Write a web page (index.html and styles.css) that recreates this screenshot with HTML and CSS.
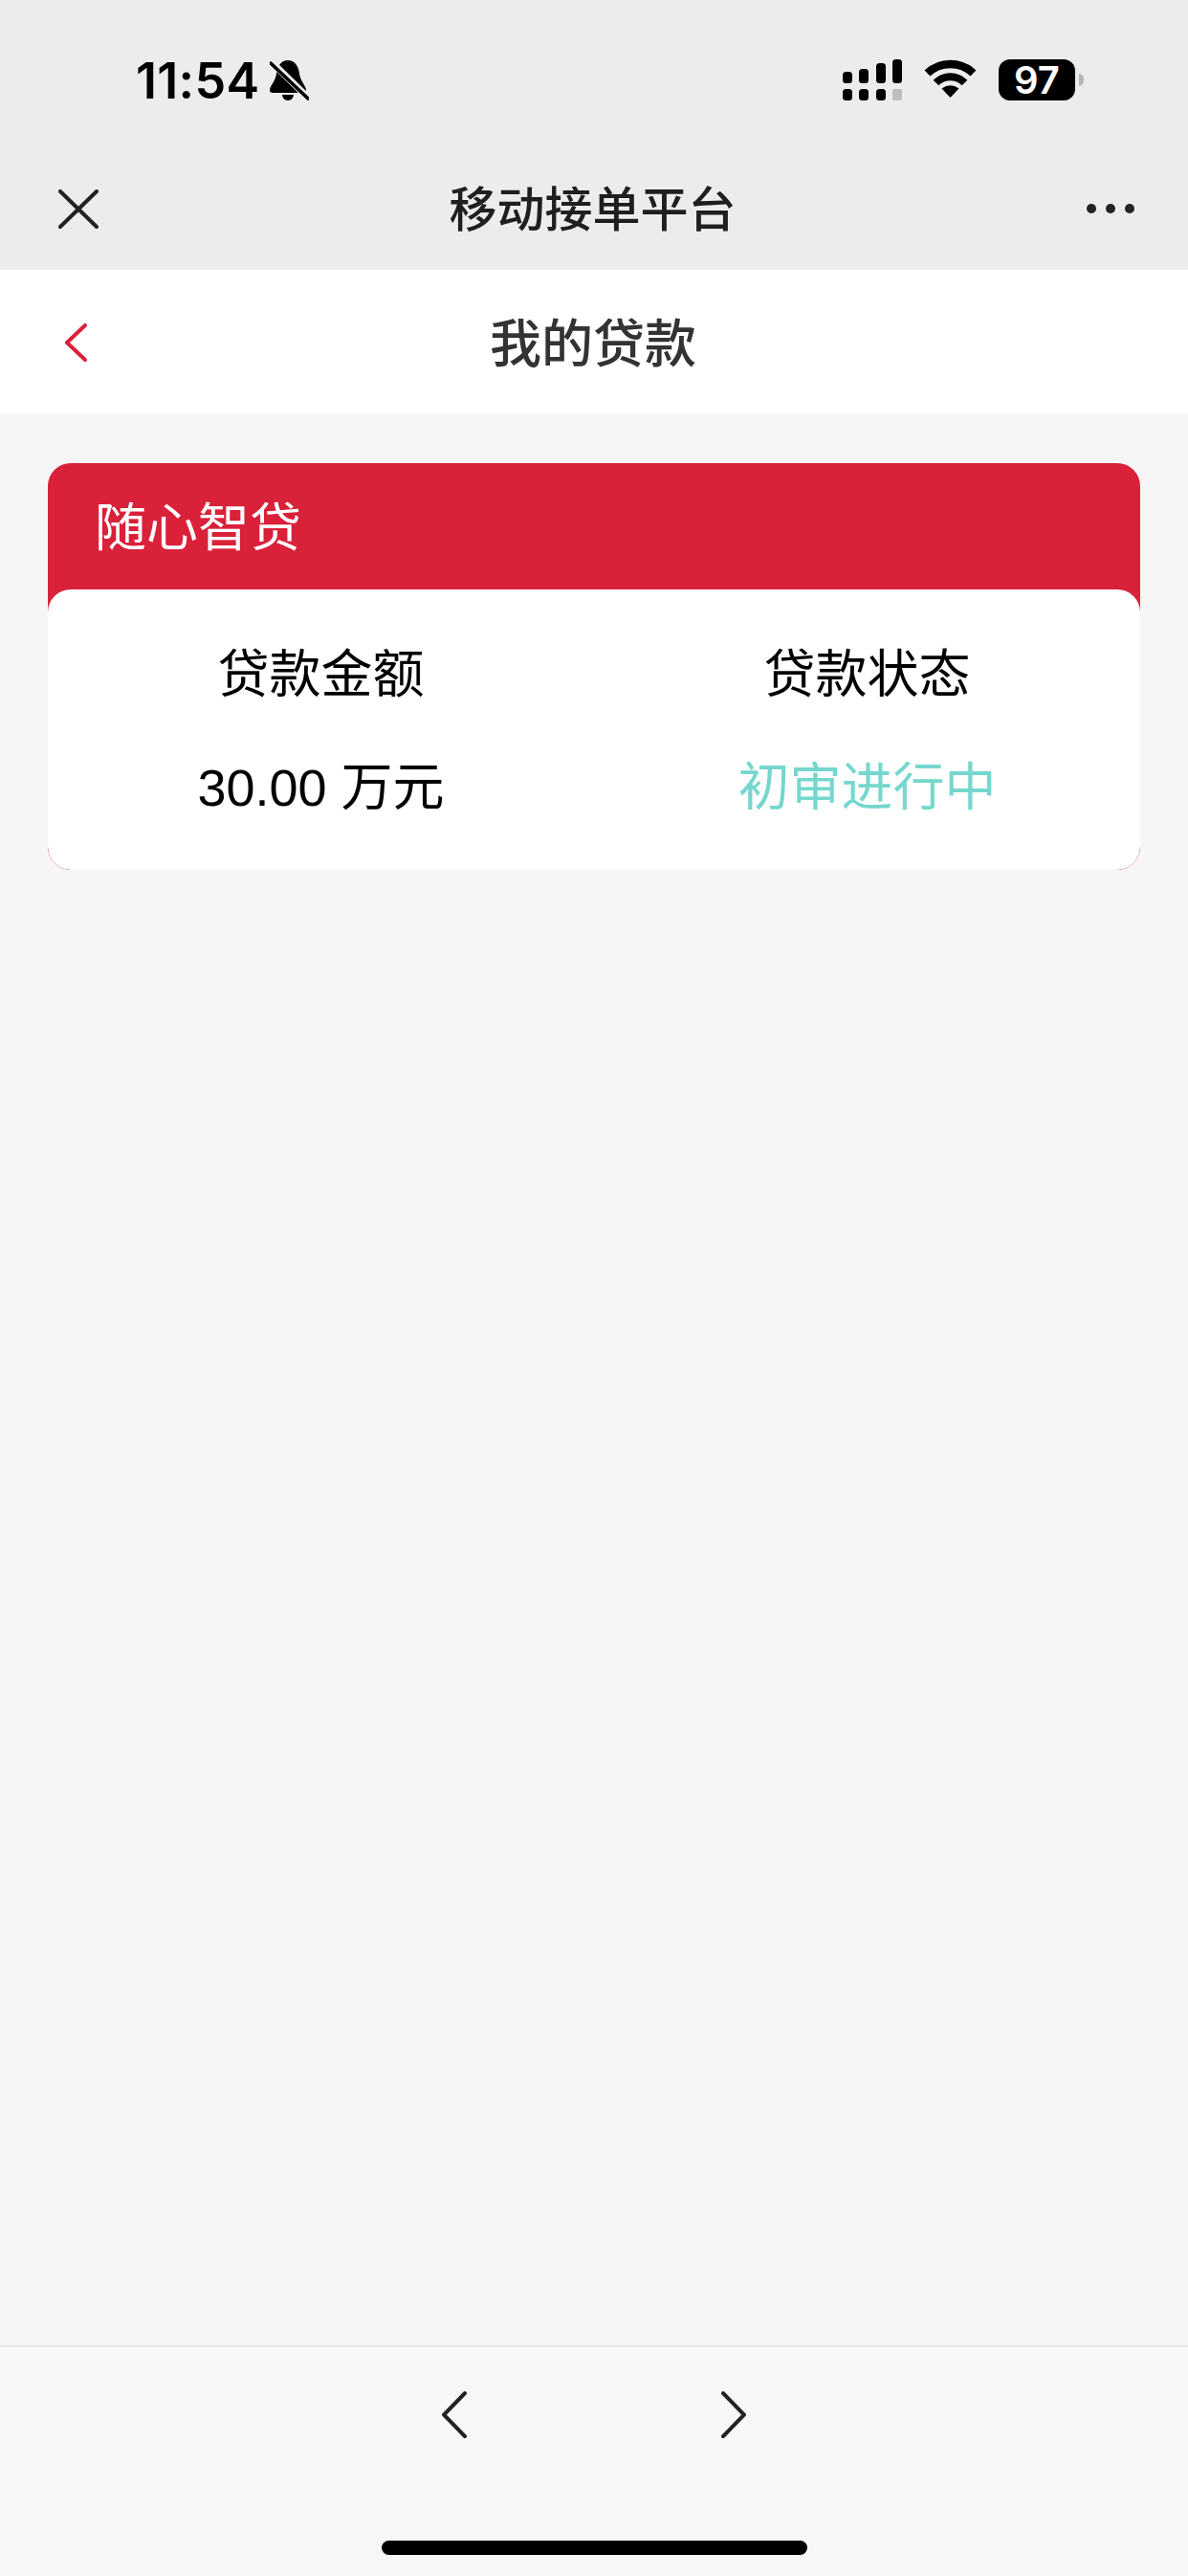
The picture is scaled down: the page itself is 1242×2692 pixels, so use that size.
FILE: index.html
```html
<!DOCTYPE html>
<html>
<head lang="zh">
    <meta charset="UTF-8">
    <title>我的贷款</title>
    <link rel="stylesheet" href="styles.css">
</head>
<body>
    <div id="top">
        <div id="status">
            <div class="status-left">
                <span class="time">11:54</span>
                <svg class="bell" width="41" height="42" viewBox="0 0 41 42">
                    <path d="M19 0C12 0 8 6 7 14C6 22 0 27 0 31C0 33 1 34 3 34H35C37 34 38 33 38 31C38 27 32 22 31 14C30 6 26 0 19 0Z"/>
                    <path d="M13 36a6 6 0 0 0 12 0Z"/>
                    <line x1="0" y1="0" x2="41" y2="40" stroke="#ececec" stroke-width="7"/>
                    <line x1="1" y1="3" x2="40" y2="40" stroke="#000" stroke-width="3.5" stroke-linecap="round"/>
                </svg>
            </div>
            <div class="status-right">
                <svg width="62" height="43" viewBox="0 0 62 43">
                    <rect x="0" y="13" width="10" height="12" rx="3.5"/>
                    <rect x="17" y="10" width="10" height="15" rx="3.5"/>
                    <rect x="35" y="4" width="10" height="21" rx="3.5"/>
                    <rect x="52" y="0" width="10" height="25" rx="3.5"/>
                    <rect x="0" y="31" width="10" height="12" rx="3.5"/>
                    <rect x="17" y="31" width="10" height="12" rx="3.5"/>
                    <rect x="35" y="31" width="10" height="12" rx="3.5"/>
                    <rect x="52" y="31" width="10" height="12" rx="2" fill="#bdbdbd"/>
                </svg>
                <svg width="55" height="40" viewBox="0 0 55 40" fill="none" stroke="#000">
                    <path d="M3.5 14.5A35 35 0 0 1 51.5 14.5" stroke-width="8.5"/>
                    <path d="M12.5 24.5A21 21 0 0 1 42.5 24.5" stroke-width="8"/>
                    <path d="M27.5 40L18.5 30.5Q27.5 24 36.5 30.5Z" fill="#000" stroke="none"/>
                </svg>
                <div class="battery">
                    <div class="battery-body">97</div>
                    <div class="battery-cap"></div>
                </div>
            </div>
        </div>
        <div class="bar wx-bar">
            <svg class="bar-left" width="42" height="41" viewBox="0 0 42 41" fill="none" stroke="#222" stroke-width="4" stroke-linecap="round">
                <path d="M2 2L40 39M40 2L2 39"/>
            </svg>
            <div class="wx-title">移动接单平台</div>
            <svg class="bar-right" width="50" height="10" viewBox="0 0 50 10" fill="#222">
                <circle cx="5" cy="5" r="5"/>
                <circle cx="25" cy="5" r="5"/>
                <circle cx="45" cy="5" r="5"/>
            </svg>
        </div>
    </div>

    <div class="bar page-bar">
        <svg class="bar-left" width="23" height="40" viewBox="0 0 23 40" fill="none" stroke="#d9213a" stroke-width="4" stroke-linecap="round" stroke-linejoin="round">
            <path d="M21 2L2 20L21 38"/>
        </svg>
        <div class="page-title">我的贷款</div>
    </div>

    <div id="main">
        <div class="card">
            <div class="card-head">随心智贷</div>
            <div class="card-body">
                <div class="col">
                    <div class="label">贷款金额</div>
                    <div class="value">30.00 万元</div>
                </div>
                <div class="col">
                    <div class="label">贷款状态</div>
                    <div class="value state">初审进行中</div>
                </div>
            </div>
        </div>
    </div>

    <div id="toolbar">
        <div class="arrows">
            <svg width="26" height="49" viewBox="0 0 26 49" fill="none" stroke="#222" stroke-width="4" stroke-linecap="round">
                <path d="M24 2L2 24.5L24 47"/>
            </svg>
            <svg width="26" height="49" viewBox="0 0 26 49" fill="none" stroke="#222" stroke-width="4" stroke-linecap="round">
                <path d="M2 2L24 24.5L2 47"/>
            </svg>
        </div>
        <div class="home"></div>
    </div>
</body>
</html>
```

FILE: styles.css
```css
*{
    margin: 0;
    padding: 0;
    box-sizing: border-box;
}
body{
    width: 1242px;
    height: 2692px;
    display: flex;
    flex-direction: column;
    background: #f6f6f6;
    font-family: "Liberation Sans", "Noto Sans CJK SC", sans-serif;
    overflow: hidden;
}
svg{
    display: block;
}

/*顶部灰色区域*/
#top{
    background: #ececec;
}
#status{
    height: 154px;
    padding: 62px 109px 0 142px;
    display: flex;
    justify-content: space-between;
    align-items: flex-start;
}
.status-left{
    display: flex;
    align-items: flex-start;
    gap: 11px;
}
.time{
    font-family: Inter, sans-serif;
    font-size: 52px;
    font-weight: 600;
    line-height: 46px;
    letter-spacing: 0.3px;
    color: #000;
}
.bell{
    margin-top: 1px;
}
.status-right{
    display: flex;
    align-items: flex-start;
    gap: 23px;
}
.battery{
    display: flex;
    align-items: center;
    gap: 4px;
}
.battery-body{
    width: 80px;
    height: 43px;
    border-radius: 12px;
    background: #000;
    color: #fff;
    font-family: Inter, sans-serif;
    font-size: 40px;
    font-weight: 600;
    line-height: 43px;
    text-align: center;
}
.battery-cap{
    width: 5px;
    height: 13px;
    border-radius: 0 5px 5px 0;
    background: #b5b5b5;
}

/*两个标题栏共用三列*/
.bar{
    display: grid;
    grid-template-columns: 1fr auto 1fr;
    align-items: center;
}
.bar-left{
    justify-self: start;
}
.bar-right{
    justify-self: end;
}
.wx-bar{
    height: 128px;
    padding: 0 58px 0 55px;
}
.wx-bar .bar-left{
    margin-left: 6px;
}
.wx-bar .bar-right{
    margin-right: -2px;
}
.wx-title{
    font-family: "Noto Sans CJK SC", sans-serif;
    font-size: 50px;
    font-weight: 500;
    line-height: 70px;
    margin-top: -6px;
    color: #1f1f1f;
}
.page-bar{
    height: 152px;
    padding: 0 70px 0 68px;
    background: #fff;
    border-bottom: 1px solid #efefef;
}
.page-title{
    font-family: "Noto Sans CJK SC", sans-serif;
    font-size: 54px;
    font-weight: 500;
    line-height: 76px;
    margin-top: -4px;
    color: #333;
}

#main{
    flex: 1;
    padding: 50px 50px 0;
}
.card{
    border-radius: 24px;
    background: #d9213a;
    overflow: hidden;
}
.card-head{
    height: 132px;
    padding: 35px 0 0 49px;
    font-size: 54px;
    line-height: 66px;
    color: #fff;
}
.card-body{
    height: 293px;
    padding-top: 55px;
    display: flex;
    background: #fff;
    border-radius: 24px;
}
.col{
    flex: 1;
    text-align: center;
}
.label{
    font-size: 54px;
    line-height: 68px;
    color: #000;
}
.value{
    margin-top: 50px;
    font-size: 54px;
    line-height: 68px;
    color: #000;
}
.state{
    color: #75d7cd;
}

/*底部工具栏*/
#toolbar{
    height: 241px;
    padding-top: 46px;
    border-top: 2px solid #e6e6e6;
    background: #f7f7f7;
}
.arrows{
    display: flex;
    justify-content: center;
    gap: 266px;
}
.home{
    width: 445px;
    height: 15px;
    margin: 107px auto 0;
    border-radius: 8px;
    background: #000;
}
```
